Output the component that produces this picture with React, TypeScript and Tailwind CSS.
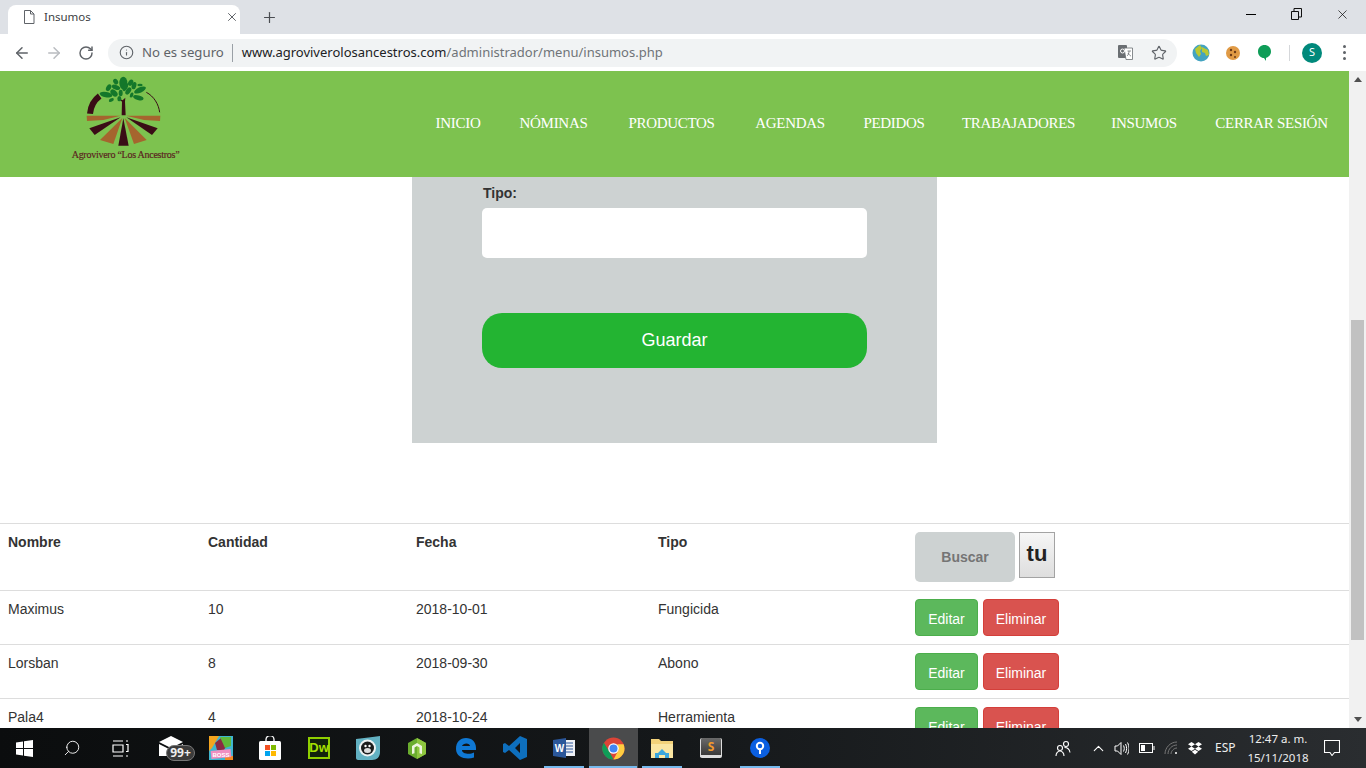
import React from "react";
import { ArrowLeft, ArrowRight, RotateCw, Info, Star, X, Plus, Search, ChevronUp } from "lucide-react";

const rows = [
  ["Maximus", "10", "2018-10-01", "Fungicida"],
  ["Lorsban", "8", "2018-09-30", "Abono"],
  ["Pala4", "4", "2018-10-24", "Herramienta"],
];
const nav: [string, string][] = [
  ["INICIO", "w-[45px]"],
  ["NÓMINAS", "w-[67px]"],
  ["PRODUCTOS", "w-[90px]"],
  ["AGENDAS", "w-[68px]"],
  ["PEDIDOS", "w-[61px]"],
  ["TRABAJADORES", "w-[109px]"],
  ["INSUMOS", "w-[63px]"],
  ["CERRAR SESIÓN", "w-[113px]"],
];

function Logo() {
  const dark = "#3a0d16";
  const brown = "#a5652e";
  const leaves: [number, number, number, number, number][] = [
    [220, 36, 12, 19, 0], [197, 32, 7, 9, -30], [242, 35, 7, 10, 30], [176, 50, 7, 11, 30], [198, 49, 13, 7, 20],
    [226, 48, 7, 13, 25], [252, 44, 7, 11, 15], [270, 42, 8, 4, 0], [270, 57, 19, 8, -25], [168, 71, 19, 8, 10],
    [192, 66, 13, 8, 45], [212, 66, 6, 10, 0], [235, 60, 7, 12, 35], [245, 72, 5, 8, 20], [265, 80, 16, 7, 15],
    [184, 87, 8, 5, -25], [208, 83, 6, 8, 0],
  ];
  return (
    <svg width="160" height="100" viewBox="0 0 480 300" className="block">
      <path d="M120 128 C122 105 133 87 149 75" fill="none" stroke={dark} strokeWidth="18" />
      <path d="M289 64 C312 76 326 100 329 124" fill="none" stroke={dark} strokeWidth="3" />
      <path d="M110 134 L212 134 L160 147 L111 150 Z" fill={brown} />
      <path d="M228 134 L331 134 L330 150 L282 147 Z" fill={brown} />
      <path d="M118 172 L212 139 L134 192 Z" fill={dark} />
      <path d="M150 207 L217 141 L190 219 Z" fill={brown} />
      <path d="M205 224 L220 142 L236 224 Z" fill={dark} />
      <path d="M224 141 L290 207 L252 219 Z" fill={brown} />
      <path d="M229 139 L323 172 L306 192 Z" fill={dark} />
      <path d="M215 133 L216 92 L205 82 L218 88 L226 80 L225 92 L227 133 Z" fill={dark} />
      {leaves.map((l, i) => (
        <ellipse key={i} cx={l[0]} cy={l[1]} rx={l[2]} ry={l[3]} fill="#14772a" transform={`rotate(${l[4]} ${l[0]} ${l[1]})`} />
      ))}
      <text x="227" y="260" textAnchor="middle" fontFamily="'Liberation Serif', serif" fontSize="30" fill="#5b2320" stroke="#5b2320" strokeWidth=".5" textLength="324">
        Agrovivero “Los Ancestros”
      </text>
    </svg>
  );
}

function Chrome() {
  return (
    <div className="shrink-0 h-[71px] bg-white font-['Noto_Sans',sans-serif]">
      <div className="h-[34px] bg-[#dee1e6] flex items-end pl-[8px]">
        <div className="h-[29px] w-[232px] bg-white rounded-t-[8px] flex items-center pl-[14px] pr-[1px] pb-[5px]">
          <svg width="14" height="16" viewBox="0 0 14 16" className="shrink-0" fill="none" stroke="#5f6368" strokeWidth="1">
            <path d="M2.5 1.5h6l3.5 3.500v9.500h-9.500zM8.500 1.500v3.500h3.500" />
          </svg>
          <span className="ml-[8px] text-[11.500px] leading-none text-[#3c4043] flex-1">Insumos</span>
          <X size={14} strokeWidth={1.7} className="text-[#5f6368]" />
        </div>
        <div className="h-[29px] w-[58px] flex items-center justify-center pb-[5px]">
          <Plus size={17} strokeWidth={1.7} className="text-[#4a4d52]" />
        </div>
        <div className="flex-1" />
        <div className="self-stretch flex items-center pb-[6px] mr-[1px]">
          <div className="w-[45px] flex justify-center">
            <div className="w-[10px] h-[1px] bg-black" />
          </div>
          <div className="w-[46px] flex justify-center">
            <svg width="11" height="12" viewBox="0 0 11 12" fill="none" stroke="#111" strokeWidth="1">
              <path d="M.5 3.500h7v8h-7zM3 3.500v-3h7.500v8.500h-3" />
            </svg>
          </div>
          <div className="w-[46px] flex justify-center">
            <X size={15} strokeWidth={1.1} className="text-black" />
          </div>
        </div>
      </div>
      <div className="h-[37px] flex items-center relative">
        <div className="w-[44px] flex justify-center">
          <ArrowLeft size={18} strokeWidth={2} className="text-[#5f6368]" />
        </div>
        <div className="w-[20px] flex justify-center">
          <ArrowRight size={18} strokeWidth={2} className="text-[#b9bcc0]" />
        </div>
        <div className="w-[44px] flex justify-center">
          <RotateCw size={16} strokeWidth={2.2} className="text-[#5f6368]" />
        </div>
        <div className="w-[1069px] h-[28px] rounded-full bg-[#f1f3f4] flex items-center pl-[11px]">
          <Info size={15} strokeWidth={1.8} className="text-[#5f6368] shrink-0" />
          <span className="ml-[8px] text-[#5f6368] text-[13.200px]">No es seguro</span>
          <div className="w-px h-[18px] bg-[#9aa0a6] ml-[8px] mr-[9px]" />
          <span className="text-[13px] text-[#202124]">www.agroviverolosancestros.com</span>
          <span className="text-[13px] text-[#6f7378]">/administrador/menu/insumos.php</span>
          <div className="flex-1" />
          <svg width="15" height="15" viewBox="0 0 15 15" className="mr-[18px]">
            <rect x="0" y="0" width="9" height="13" rx="1" fill="#6a6e72" />
            <path d="M6 3h8.500v11.500H8z" fill="#fff" stroke="#6a6e72" strokeWidth=".8" />
            <circle cx="4.500" cy="6" r="2" fill="none" stroke="#fff" />
            <path d="M9.500 6h3.500M11 6c0 3-1 4-2 5M10 8c1 2 2 2.500 3 3" fill="none" stroke="#6a6e72" strokeWidth=".8" />
          </svg>
          <Star size={16} strokeWidth={1.7} className="text-[#5f6368] mr-[10px]" />
        </div>
        <div className="w-[15px]" />
        <svg width="18" height="18" viewBox="0 0 18 18">
          <circle cx="9" cy="9" r="8.500" fill="#43a3c0" />
          <path d="M3 5l5-4 2 3-2 3 1 3-2 3-3-4zM10 3l6 3 1 5-3 1-1-3-3-1z" fill="#b9c832" />
        </svg>
        <svg width="16" height="16" viewBox="0 0 16 16" className="ml-[15px]">
          <circle cx="8" cy="8" r="7" fill="#e09a45" />
          <circle cx="6" cy="5" r="1.200" fill="#6b3a17" />
          <circle cx="10" cy="7" r="1.200" fill="#6b3a17" />
          <circle cx="6" cy="10" r="1.200" fill="#6b3a17" />
          <circle cx="10" cy="12" r="1" fill="#6b3a17" />
        </svg>
        <svg width="15" height="18" viewBox="0 0 15 18" className="ml-[16px]">
          <path d="M7.500 1C11 1 14 3.500 14 7.500S11 13 9 14v3l-2-3C4 14 1 11.500 1 7.500S4 1 7.500 1z" fill="#0f9d58" />
        </svg>
        <div className="w-px h-[16px] bg-[#d5d7da] ml-[17px]" />
        <div className="ml-[12px] w-[20px] h-[20px] rounded-full bg-[#00897b] flex items-center justify-center text-[11px] text-white">S</div>
        <div className="ml-[21px] flex flex-col gap-[3px]">
          <div className="w-[3px] h-[3px] rounded-full bg-[#5f6368]" />
          <div className="w-[3px] h-[3px] rounded-full bg-[#5f6368]" />
          <div className="w-[3px] h-[3px] rounded-full bg-[#5f6368]" />
        </div>
      </div>
    </div>
  );
}

function Page() {
  return (
    <div className="flex-1 min-w-0 h-full overflow-hidden font-['Liberation_Sans',sans-serif] text-[14px] text-[#333]">
      <div className="h-[106px] bg-[#7dc24f] flex">
        <div className="ml-[50px] w-[160px] shrink-0">
          <Logo />
        </div>
        <div className="flex-1 flex items-center justify-end pr-[21px] pb-[1px] gap-[39.500px] font-['Liberation_Serif',serif] text-[15px] text-white">
          {nav.map(([n, w]) => (
            <span key={n} className={`${w} flex justify-center tracking-[-0.3px] whitespace-nowrap`}>{n}</span>
          ))}
        </div>
      </div>
      <div className="ml-[412px] w-[525px] h-[266px] bg-[#cdd2d2] pl-[70px] pt-[6px]">
        <div className="pl-[1px] font-bold leading-[20px]">Tipo:</div>
        <div className="mt-[5px] w-[385px] h-[50px] bg-white rounded-[5px]" />
        <div className="mt-[55px] w-[385px] h-[55px] rounded-[20px] bg-[#23b432] flex items-center justify-center text-white text-[18px]">Guardar</div>
      </div>
      <div className="mt-[80px] border-t border-[#ddd] h-[68px] border-b grid grid-cols-[200px_208px_242px_257px_1fr]">
        <div className="pl-[8px] pt-[8px] font-bold leading-[20px]">Nombre</div>
        <div className="pl-[8px] pt-[8px] font-bold leading-[20px]">Cantidad</div>
        <div className="pl-[8px] pt-[8px] font-bold leading-[20px]">Fecha</div>
        <div className="pl-[8px] pt-[8px] font-bold leading-[20px]">Tipo</div>
        <div className="pl-[8px] pt-[8px] flex items-start">
          <div className="w-[100px] h-[50px] rounded-[5px] bg-[#cdd2d2] flex items-center justify-center font-bold text-[#757575]">Buscar</div>
          <div className="ml-[4px] w-[36px] h-[46px] border border-[#a3a3a3] bg-linear-to-b from-[#f6f6f6] to-[#dedede] flex items-center justify-center pb-[3px] font-bold text-[22px] text-[#222]">tu</div>
        </div>
      </div>
      {rows.map((r) => (
        <div key={r[0]} className="h-[54px] border-b border-[#ddd] grid grid-cols-[200px_208px_242px_257px_1fr] leading-[20px]">
          {r.map((c) => (
            <div key={c} className="pl-[8px] pt-[8px]">{c}</div>
          ))}
          <div className="pl-[8px] pt-[8px] flex gap-[5px]">
            <div className="w-[63px] h-[37px] pt-[2px] rounded-[4px] bg-[#5cb85c] border border-[#4cae4c] text-white flex items-center justify-center">Editar</div>
            <div className="w-[76px] h-[37px] pt-[2px] rounded-[4px] bg-[#d9534f] border border-[#d43f3a] text-white flex items-center justify-center">Eliminar</div>
          </div>
        </div>
      ))}
    </div>
  );
}

function Scrollbar() {
  return (
    <div className="w-[17px] shrink-0 h-full bg-[#f1f1f1] flex flex-col items-center">
      <div className="h-[17px] flex items-center justify-center">
        <div className="w-0 h-0 border-x-[4px] border-x-transparent border-b-[5px] border-b-[#505050]" />
      </div>
      <div className="mt-[232px] w-[13px] h-[320px] bg-[#c1c1c1]" />
      <div className="flex-1" />
      <div className="h-[17px] flex items-center justify-center">
        <div className="w-0 h-0 border-x-[4px] border-x-transparent border-t-[5px] border-t-[#505050]" />
      </div>
    </div>
  );
}

function TaskIcon({ children, active, under }: { children: React.ReactNode; active?: boolean; under?: boolean }) {
  return (
    <div className={`w-[49px] h-full relative flex items-center justify-center ${active ? "bg-[#4a4b4c]" : ""}`}>
      {children}
      {under && <div className={`absolute bottom-0 h-[2px] bg-[#76b9ed] ${active ? "left-0 right-px" : "left-[4px] right-[5px]"}`} />}
    </div>
  );
}

function Taskbar() {
  return (
    <div className="shrink-0 h-[40px] bg-linear-to-r from-[#0b0d0e] via-[#15181a] to-[#2a2d30] flex items-center text-white font-['Noto_Sans',sans-serif]">
      <div className="w-[48px] flex justify-center">
        <svg width="17" height="17" viewBox="0 0 17 17" fill="#fff">
          <path d="M0 2.500l7-1v6.500H0zM8 1.300L17 0v8H8zM0 9h7v6.500l-7-1zM8 9h9v8l-9-1.300z" />
        </svg>
      </div>
      <div className="w-[48px] flex justify-center">
        <Search size={18} strokeWidth={1.2} className="-scale-x-100" />
      </div>
      <div className="w-[51.500px] flex justify-center pr-[3px]">
        <svg width="17" height="17" viewBox="0 0 17 17" fill="none" stroke="#fff" strokeWidth="1.200">
          <path d="M1 1h10M1 16h10M1 5h10v7H1zM14 1h2M14 4.500h2v7h-2M14 16h2" />
        </svg>
      </div>
      <TaskIcon>
        <div className="relative -translate-x-[1px] -translate-y-[2px]">
          <svg width="24" height="20" viewBox="0 0 24 20" className="block">
            <path d="M0 6L12 0l12 6-12 6z" fill="#fff" />
            <path d="M0 8l12 6 12-6v12H0z" fill="#fff" />
          </svg>
          <div className="absolute left-[7px] top-[9px] w-[29px] h-[16px] rounded-full bg-[#3b3b3b] border border-[#777] flex items-center justify-center text-[12px] leading-none font-bold text-[#eee]">99+</div>
        </div>
      </TaskIcon>
      <TaskIcon>
        <svg width="24" height="24" viewBox="0 0 24 24">
          <rect width="24" height="24" fill="#3fb6d0" />
          <path d="M0 0h10L3 12 0 15z" fill="#f4a51f" />
          <path d="M6 7l6-5 7 5-4 7H8z" fill="#8a2a44" />
          <path d="M11 1h11v9l-6 2z" fill="#5fb83a" />
          <path d="M16 20h8v4h-8z" fill="#f08a22" />
          <rect x="2" y="14" width="20" height="8" fill="#ef8fc0" transform="rotate(-6 12 18)" />
          <text x="12" y="21" textAnchor="middle" fontSize="6" fontWeight="700" fill="#fff" fontFamily="'Liberation Sans', sans-serif">BOSS</text>
        </svg>
      </TaskIcon>
      <TaskIcon>
        <svg width="22" height="24" viewBox="0 0 22 24">
          <path d="M7 6V3.500a4 4 0 0 1 8 0V6" fill="none" stroke="#fff" strokeWidth="1.300" />
          <rect y="5" width="22" height="19" rx="1.500" fill="#fff" />
          <rect x="6" y="9" width="5" height="5" fill="#f25022" />
          <rect x="12" y="9" width="5" height="5" fill="#7fba00" />
          <rect x="6" y="15" width="5" height="5" fill="#00a4ef" />
          <rect x="12" y="15" width="5" height="5" fill="#ffb900" />
        </svg>
      </TaskIcon>
      <TaskIcon>
        <div className="w-[22px] h-[22px] border-2 border-[#8fcf00] bg-[#12220c] flex items-center justify-center text-[13px] font-['Liberation_Sans',sans-serif] font-bold text-[#a6e000]">Dw</div>
      </TaskIcon>
      <TaskIcon>
        <svg width="24" height="24" viewBox="0 0 24 24">
          <path d="M0 3C8 2 17 1 24 0v16c0 5-3 8-8 8H2c-1 0-2-1-2-2z" fill="#62b1c2" />
          <circle cx="11.500" cy="12" r="8.500" fill="#eef3f3" />
          <circle cx="11.500" cy="12" r="6.500" fill="#1c1c1c" />
          <ellipse cx="11.500" cy="14.500" rx="3.500" ry="2.500" fill="#ddd" />
          <circle cx="9.500" cy="10" r="1.200" fill="#fff" />
          <circle cx="13.500" cy="10" r="1.200" fill="#fff" />
        </svg>
      </TaskIcon>
      <TaskIcon>
        <svg width="18" height="21" viewBox="0 0 18 21">
          <path d="M9 0l9 5v11l-9 5-9-5V5z" fill="#6aad2e" />
          <path d="M9 0l9 5v11l-9 5z" fill="#8ec63f" />
          <path d="M9 5l5 3v8l-2.500-.800V9.500L9 8 6.500 9.500V15.200L4 16V8z" fill="#eef5df" />
        </svg>
      </TaskIcon>
      <TaskIcon>
        <svg width="20" height="21" viewBox="0 0 20 21">
          <path d="M0 11C0 4 4 0 10 0c6 0 10 4 10 10v2H6c0 4 8 5 12 2.500v5C11 22 0 20 0 11zm6-3h8c0-3.500-7-3.500-8 0z" fill="#0f78d4" />
        </svg>
      </TaskIcon>
      <TaskIcon>
        <svg width="24" height="24" viewBox="0 0 24 24">
          <path d="M17 0l7 3v18l-7 3L6 14l-4 3-2-1V8l2-1 4 3zM17 7l-5 5 5 5z" fill="#0e6fbd" />
        </svg>
      </TaskIcon>
      <TaskIcon under>
        <svg width="22" height="20" viewBox="0 0 22 20">
          <path d="M8 2h14v16H8z" fill="#eef1f6" />
          <path d="M12 5h8M12 8h8M12 11h8M12 14h8" stroke="#2b579a" strokeWidth="1.200" />
          <path d="M0 2l13-2v20L0 18z" fill="#2b579a" />
          <text x="6.500" y="14" textAnchor="middle" fontSize="10" fontWeight="700" fill="#fff" fontFamily="'Liberation Sans', sans-serif">W</text>
        </svg>
      </TaskIcon>
      <TaskIcon active under>
        <svg width="23" height="23" viewBox="0 0 24 24">
          <circle cx="12" cy="12" r="11.500" fill="#db4437" />
          <path d="M12 23.500A11.500 11.500 0 0 1 2 6l6 10 4 7.500z" fill="#0f9d58" />
          <path d="M23.500 12A11.500 11.500 0 0 1 12 23.500l5-9.500-1-6.500h6.500a11.500 11.500 0 0 1 1 4.500z" fill="#ffcd40" />
          <circle cx="12" cy="12" r="5.500" fill="#fff" />
          <circle cx="12" cy="12" r="4.200" fill="#4285f4" />
        </svg>
      </TaskIcon>
      <TaskIcon under>
        <svg width="22" height="19" viewBox="0 0 22 19">
          <path d="M0 0h8l2 2h12v17H0z" fill="#f3d27a" />
          <path d="M0 5h22v14H0z" fill="#fbe6a2" />
          <path d="M4 19v-5h3l4-4 4 4h3v5h-4v-3H8v3z" fill="#3ba6dd" />
        </svg>
      </TaskIcon>
      <TaskIcon>
        <div className="w-[22px] h-[20px] rounded-[2px] bg-linear-to-b from-[#6a6a6a] to-[#3a3a3a] border-b-[3px] border-x border-[#ddd] flex items-center justify-center text-[12px] font-bold text-[#f39a2b]">S</div>
      </TaskIcon>
      <TaskIcon under>
        <svg width="20" height="20" viewBox="0 0 20 20">
          <circle cx="10" cy="10" r="10" fill="#0b5fe0" />
          <circle cx="10" cy="8" r="3.200" fill="none" stroke="#fff" strokeWidth="2" />
          <path d="M9 10.500h2v5.500H9z" fill="#fff" />
        </svg>
      </TaskIcon>
      <div className="flex-1" />
      <svg width="16" height="17" viewBox="0 0 16 17" fill="none" stroke="#fff" strokeWidth="1.100" className="mr-[19px]">
        <circle cx="5" cy="8" r="2.500" />
        <path d="M1 16c0-3 2-5 4-5s4 2 4 5" />
        <circle cx="11" cy="4" r="2.500" />
        <path d="M9.500 7.500c3 0 5 2 5.500 5" />
      </svg>
      <ChevronUp size={17} strokeWidth={1.5} className="mr-[7px]" />
      <svg width="15" height="15" viewBox="0 0 15 15" fill="none" stroke="#fff" strokeWidth="1" className="mr-[10px]">
        <path d="M1 5h2.500L7 1.500v12L3.500 10H1zM9.500 4.500c1 2 1 4 0 6M11.500 3c1.500 3 1.500 6 0 9M13.500 1.500c2 4 2 8 0 12" />
      </svg>
      <svg width="16" height="10" viewBox="0 0 16 10" fill="none" stroke="#fff" strokeWidth="1" className="mr-[9px]">
        <rect x=".5" y=".5" width="13" height="9" />
        <rect x="2" y="2" width="4" height="6" fill="#fff" stroke="none" />
        <path d="M15 3v4" />
      </svg>
      <svg width="14" height="14" viewBox="0 0 14 14" fill="none" stroke="#777" strokeWidth="1" className="mr-[10px]">
        <path d="M1 13c0-6 5-12 12-12M4 13c0-5 4-9 9-9M7 13c0-3 3-6 6-6" />
        <circle cx="12" cy="12" r="1" fill="#fff" stroke="none" />
      </svg>
      <svg width="14" height="13" viewBox="0 0 14 13" fill="#fff" className="mr-[13px]">
        <path d="M3.500 0L7 2.200 3.500 4.500 0 2.200zM10.500 0L14 2.200l-3.500 2.300L7 2.200zM3.500 4.500L7 6.800 3.500 9 0 6.800zM10.500 4.500L14 6.800 10.500 9 7 6.800zM3.800 9.800L7 7.800l3.200 2L7 12.500z" />
      </svg>
      <span className="text-[12px] w-[24px] mr-[9px] text-[#eee]">ESP</span>
      <div className="w-[60px] flex flex-col items-center whitespace-nowrap text-[11.500px] leading-[19px] text-[#eee]">
        <span>12:47 a. m.</span>
        <span>15/11/2018</span>
      </div>
      <div className="w-[48px] mr-[10px] flex justify-center">
        <svg width="16" height="16" viewBox="0 0 16 16" fill="none" stroke="#fff" strokeWidth="1.100">
          <path d="M.5.500h15v12h-5L8 15.500 6 12.500H.5z" />
        </svg>
      </div>
    </div>
  );
}

export default function App() {
  return (
    <div className="w-[1366px] h-[768px] overflow-hidden flex flex-col bg-white">
      <Chrome />
      <div className="flex-1 min-h-0 flex">
        <Page />
        <Scrollbar />
      </div>
      <Taskbar />
    </div>
  );
}
